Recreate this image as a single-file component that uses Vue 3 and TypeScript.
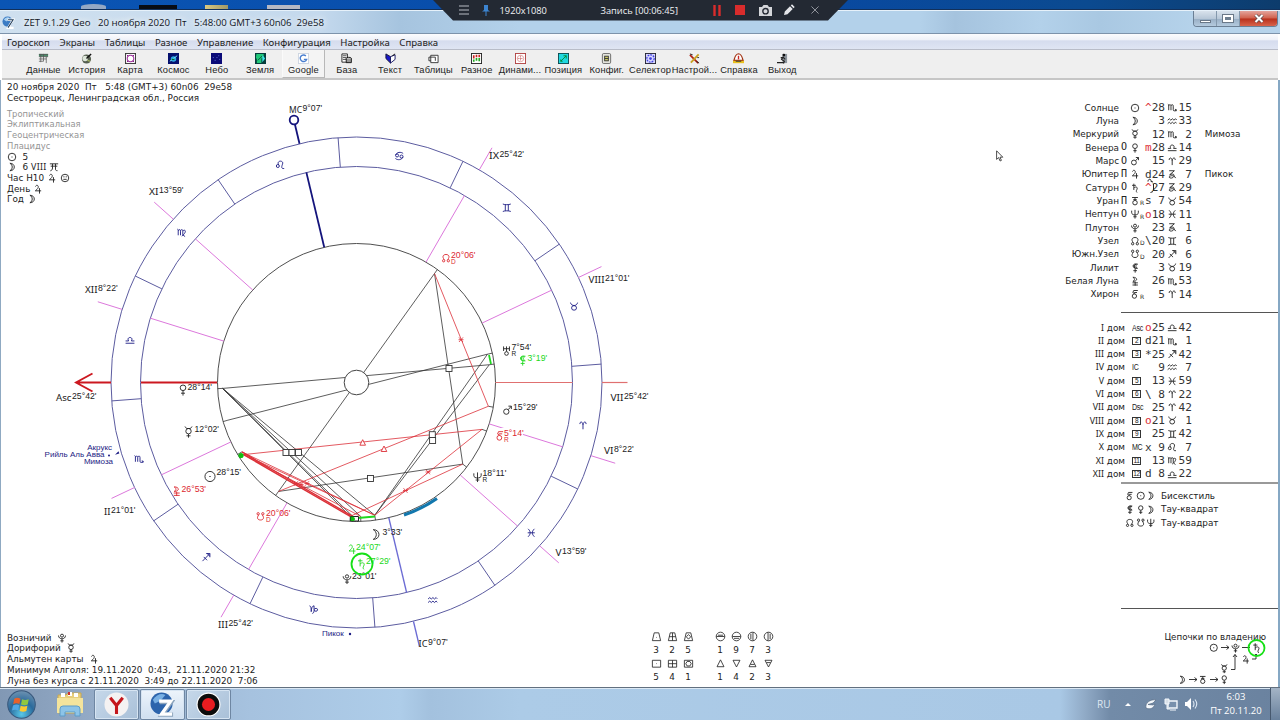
<script setup lang="ts">
import { ref } from "vue";

// every symbol is drawn by strokes inside a 12x12 box
const glyphs: Record<string, string> = {
  sun: "M1.5 6a4.5 4.5 0 1 0 9 0a4.5 4.5 0 1 0-9 0M5.4 6h1.2",
  moon: "M3.5 1.5C10.5 1.5 10.5 10.5 3.5 10.5C7.2 8.5 7.2 3.5 3.5 1.5",
  mercury: "M2.5 .5l1.6 2h3.8l1.6-2M3.3 5.2a2.7 2.7 0 1 0 5.4 0a2.7 2.7 0 1 0-5.4 0M6 8v3.7M4 9.8h4",
  venus: "M3.2 3.8a2.8 2.8 0 1 0 5.6 0a2.8 2.8 0 1 0-5.6 0M6 6.6v5M4 9.2h4",
  mars: "M1.8 7.8a2.9 2.9 0 1 0 5.8 0a2.9 2.9 0 1 0-5.8 0M6.8 5.6L10 2M7 1.8h3.2v3.2",
  jupiter: "M3 3C4 .5 7 1.5 6.2 4.3C5.7 6 4 7 2.8 8.2h7M7.8 5v6.5",
  saturn: "M2.5 2.8h4.5M4.6 .8v7.6M4.6 6C6.5 4 9.2 4.6 8.6 7C8.2 8.6 6.6 9.6 8.4 11.4",
  uranus: "M2.8 1v5M9.2 1v5M2.8 3.5h6.4M6 1v5.5M4 8.7a2 2 0 1 0 4 0a2 2 0 1 0-4 0",
  uranusT: "M2.5 1.8h7M4 4.3h4M6 1.8v2.5M3.3 8a2.7 2.7 0 1 0 5.4 0a2.7 2.7 0 1 0-5.4 0",
  neptune: "M2 2v2.5c0 3.5 8 3.5 8 0V2M6 1v10.5M4 9.3h4",
  pluto: "M4.2 3.2a1.8 1.8 0 1 0 3.6 0a1.8 1.8 0 1 0-3.6 0M1.8 3c0 5.3 8.4 5.3 8.4 0M6 7v4.5M4 9.4h4",
  node: "M4 8C1 4.5 2.5 1.8 6 1.8s5 2.7 2 6.2M1.8 9.3a1.4 1.4 0 1 0 2.8 0a1.4 1.4 0 1 0-2.8 0M7.4 9.3a1.4 1.4 0 1 0 2.8 0a1.4 1.4 0 1 0-2.8 0",
  snode: "M4 4C1 7.5 2.5 10.2 6 10.2s5-2.7 2-6.2M1.8 2.7a1.4 1.4 0 1 0 2.8 0a1.4 1.4 0 1 0-2.8 0M7.4 2.7a1.4 1.4 0 1 0 2.8 0a1.4 1.4 0 1 0-2.8 0",
  lilith: "M9 1.4C2 -.6 2 7.6 9 6.4C6.4 5 6.4 2.8 9 1.4M7.6 1.6C4 1.2 4 6.4 7.4 6.2M5.2 2v4M6.2 6.8v4.8M4 9.2h4.4",
  selena: "M3.5 1.5C9.5 1.5 9.5 6.5 3.5 6.5C6 5 6 3 3.5 1.5M3 8.2h6.5M3 10.8h6.5M6.2 7v4.5",
  chiron: "M2.7 8.5a2.6 2.6 0 1 0 5.2 0a2.6 2.6 0 1 0-5.2 0M5.8 5.8L3.4 4.4L4.4 1.8h5M5 4.2h3.4",
  aries: "M2.5 4.6C2.1 1.5 5.8 1.3 6 5.5V10.5M9.5 4.6C9.9 1.5 6.2 1.3 6 5.5",
  taurus: "M3.2 7.8a2.8 2.6 0 1 0 5.6 0a2.8 2.6 0 1 0-5.6 0M2 1.8c.8 4.4 7.2 4.4 8 0",
  gemini: "M1.5 1.8c2.5 1 6.5 1 9 0M1.5 10.2c2.5-1 6.5-1 9 0M4.3 2.5v7M7.7 2.5v7",
  cancer: "M1.8 5.4a1.7 1.7 0 1 0 3.4 0a1.7 1.7 0 1 0-3.4 0M6.8 6.6a1.7 1.7 0 1 0 3.4 0a1.7 1.7 0 1 0-3.4 0M1.8 5C3 1.4 8 1 10.4 3.2M10.2 7C9 10.600 4 11 1.6 8.8",
  leo: "M1.5 7.2a1.7 1.7 0 1 0 3.4 0a1.7 1.7 0 1 0-3.4 0M4 5.8C1.5 .5 10 .5 8.6 4.8C7.6 7.5 6.4 10.6 10.4 10",
  virgo: "M1 2.5l1 .8V9.5M2 4c2-1.8 2.6-.5 2.6 .8V9.5M4.6 4c2-1.8 2.6-.5 2.6 .8V9l2.6 2M7.2 4.5c3.6-2.5 4.4 2-1.2 6",
  libra: "M1 10h10M1 7.4h3.4C1.4 2.2 10.6 2.2 7.6 7.4H11",
  scorpio: "M1 2.5l1 .8V9.5M2 4c2-1.8 2.6-.5 2.6 .8V9.5M4.6 4c2-1.8 2.6-.5 2.6 .8V9c0 1.6 1.8 1.6 3.4 .4M9.2 8.4l1.8 .6l-.8 1.8",
  sagittarius: "M1.8 10.4L10 2M6 1.8h4.2V6M7 1.8l3.2 3M3.2 5.6l3.8 3.8",
  capricorn: "M1.2 2.5c1.6 0 2 2 2 6.5C3.4 5 4.4 2.4 6.4 2.4V8c0 2-1 3-2 3M6.4 6.6c1-2 4.2-1.6 4 .4s-3 2-4 .4",
  capricornT: "M2.500 2h6L3 6.8c3-2 6-.8 5 1.700S3 11 2.5 9.5S8 6 10 10.5",
  aquarius: "M.8 4.8l1.9-1.6 1.7 1.6 1.9-1.6 1.7 1.6 1.9-1.6 1.3 1.4M.8 8.8l1.9-1.6 1.7 1.6 1.9-1.6 1.7 1.6 1.9-1.6 1.3 1.4",
  pisces: "M2.4 1.5c3.2 3 3.2 6 0 9M9.6 1.5c-3.2 3-3.2 6 0 9M2 6h8",
  gate: "M1 2.2h10M2 5h8M4.2 2.2v5c0 2-1 3-2.6 3.4M7.8 2.2V9c0 1 .8 1.4 2.4 1.4",
  face: "M1.5 6a4.5 4.5 0 1 0 9 0a4.5 4.5 0 1 0-9 0M4 4.6h1.4M6.8 4.6h1.4M4 7.6h4",
};

const title = "ZET 9.1.29 Geo   20 ноября 2020  Пт   5:48:00 GMT+3 60n06  29e58";
const heading = "20 ноября 2020  Пт   5:48 (GMT+3) 60n06  29e58";
const algol = "Минимум Алголя: 19.11.2020  0:43,  21.11.2020 21:32";
const voidMoon = "Луна без курса с 21.11.2020  3:49 до 22.11.2020  7:06";

const menu = ref(["Гороскоп", "Экраны", "Таблицы", "Разное", "Управление", "Конфигурация", "Настройка", "Справка"]);

const tools = ref([
  { icon: "data", label: "Данные" },
  { icon: "history", label: "История" },
  { icon: "map", label: "Карта" },
  { icon: "cosmos", label: "Космос" },
  { icon: "sky", label: "Небо" },
  { icon: "earth", label: "Земля" },
  { icon: "google", label: "Google" },
  { icon: "base", label: "База" },
  { icon: "text", label: "Текст" },
  { icon: "tables", label: "Таблицы" },
  { icon: "misc", label: "Разное" },
  { icon: "dynamic", label: "Динами..." },
  { icon: "position", label: "Позиция" },
  { icon: "config", label: "Конфиг." },
  { icon: "selector", label: "Селектор" },
  { icon: "settings", label: "Настрой..." },
  { icon: "help", label: "Справка" },
  { icon: "exit", label: "Выход" },
]);

interface Row {
  name: string;
  dig?: string;
  g?: string;
  sub?: string;
  box?: string;
  abbr?: string;
  asp?: string;
  red?: boolean;
  deg: string;
  sign: string;
  min: string;
  star?: string;
}

const planets: Row[] = [
  { name: "Солнце", g: "sun", asp: "^", red: true, deg: "28", sign: "scorpio", min: "15" },
  { name: "Луна", g: "moon", deg: " 3", sign: "aquarius", min: "33" },
  { name: "Меркурий", g: "mercury", deg: "12", sign: "scorpio", min: " 2", star: "Мимоза" },
  { name: "Венера", dig: "O", g: "venus", asp: "m", red: true, deg: "28", sign: "libra", min: "14" },
  { name: "Марс", dig: "O", g: "mars", deg: "15", sign: "aries", min: "29" },
  { name: "Юпитер", dig: "П", g: "jupiter", asp: "d", deg: "24", sign: "capricornT", min: " 7", star: "Пикок" },
  { name: "Сатурн", dig: "O", g: "saturn", asp: "^", red: true, deg: "27", sign: "capricornT", min: "29" },
  { name: "Уран", dig: "П", g: "uranusT", sub: "R", asp: "s", deg: " 7", sign: "taurus", min: "54" },
  { name: "Нептун", dig: "O", g: "neptune", sub: "R", asp: "o", red: true, deg: "18", sign: "pisces", min: "11" },
  { name: "Плутон", g: "pluto", deg: "23", sign: "capricornT", min: " 1" },
  { name: "Узел", g: "node", sub: "D", asp: "\\", deg: "20", sign: "gemini", min: " 6" },
  { name: "Южн.Узел", g: "snode", sub: "D", deg: "20", sign: "sagittarius", min: " 6" },
  { name: "Лилит", g: "lilith", deg: " 3", sign: "taurus", min: "19" },
  { name: "Белая Луна", g: "selena", deg: "26", sign: "scorpio", min: "53" },
  { name: "Хирон", g: "chiron", sub: "R", deg: " 5", sign: "aries", min: "14" },
];

const houses: Row[] = [
  { name: "I", abbr: "Asc", asp: "o", red: true, deg: "25", sign: "libra", min: "42" },
  { name: "II", box: "2", asp: "d", deg: "21", sign: "scorpio", min: " 1" },
  { name: "III", box: "3", asp: "*", deg: "25", sign: "sagittarius", min: "42" },
  { name: "IV", abbr: "IC", deg: " 9", sign: "aquarius", min: " 7" },
  { name: "V", box: "5", deg: "13", sign: "pisces", min: "59" },
  { name: "VI", box: "6", asp: "\\", deg: " 8", sign: "aries", min: "22" },
  { name: "VII", abbr: "Dsc", deg: "25", sign: "aries", min: "42" },
  { name: "VIII", box: "8", asp: "o", red: true, deg: "21", sign: "taurus", min: " 1" },
  { name: "IX", box: "9", deg: "25", sign: "gemini", min: "42" },
  { name: "X", abbr: "MC", asp: "x", deg: " 9", sign: "leo", min: " 7" },
  { name: "XI", box: "11", deg: "13", sign: "virgo", min: "59" },
  { name: "XII", box: "12", asp: "d", deg: " 8", sign: "libra", min: "22" },
];

const patterns = [
  { g: ["chiron", "sun", "moon"], text: "Бисекстиль" },
  { g: ["lilith", "venus", "moon"], text: "Тау-квадрат" },
  { g: ["node", "snode", "neptune"], text: "Тау-квадрат" },
];

// chart geometry
const CX = 356.5;
const CY = 382.5;
const R_OUT = 245.5;
const R_ZOD = 216;
const R_IN = 139;
const R_ASP = 134;
const ASC = 205.7;

const pt = (lon: number, r: number) => {
  const a = ((180 + lon - ASC) * Math.PI) / 180;
  return { x: CX + r * Math.cos(a), y: CY - r * Math.sin(a) };
};

const seg = (lon: number, r1: number, r2: number) => {
  const a = pt(lon, r1);
  const b = pt(lon, r2);
  return { x1: a.x, y1: a.y, x2: b.x, y2: b.y };
};

const link = (l1: number, l2: number) => {
  const a = pt(l1, R_ASP);
  const b = pt(l2, R_ASP);
  return { x1: a.x, y1: a.y, x2: b.x, y2: b.y };
};

const signs = ["aries", "taurus", "gemini", "cancer", "leo", "virgo", "libra", "scorpio", "sagittarius", "capricorn", "aquarius", "pisces"].map(
  (name, i) => ({ name, border: i * 30, ...pt(i * 30 + 15, 230.5) })
);

const cusps = [
  { lon: 231.02, kind: "house" },
  { lon: 265.7, kind: "house" },
  { lon: 309.12, kind: "ic" },
  { lon: 343.98, kind: "house" },
  { lon: 8.37, kind: "house" },
  { lon: 25.7, kind: "dsc" },
  { lon: 51.02, kind: "house" },
  { lon: 85.7, kind: "house" },
  { lon: 163.98, kind: "house" },
  { lon: 188.37, kind: "house" },
];

const P = {
  sun: 238.25, moon: 303.55, mercury: 222.03, venus: 208.23, mars: 15.48,
  jupiter: 294.12, saturn: 297.48, uranus: 37.9, neptune: 348.18, pluto: 293.02,
  node: 80.1, snode: 260.1, lilith: 33.32, selena: 236.88, chiron: 5.23,
};

const blackAspects = [
  link(P.node, P.snode), link(P.venus, P.lilith), link(P.mercury, P.uranus),
  link(P.node, P.neptune), link(P.neptune, P.snode),
  link(P.venus, P.pluto), link(P.venus, P.jupiter), link(P.venus, P.saturn), link(P.venus, P.moon),
  link(P.uranus, P.moon), link(P.lilith, P.moon),
];

const redAspects = [
  link(P.node, P.mars), link(P.mars, P.snode), link(P.sun, P.chiron),
  link(P.chiron, P.moon), link(P.neptune, P.pluto),
  link(P.sun, P.saturn), link(P.selena, P.moon), link(P.sun, P.moon),
];

const boldAspects = [link(P.sun, P.pluto), link(P.selena, P.jupiter)];

const squares = [[286, 452.5], [292, 452.5], [298.5, 452.5], [449, 368.5], [432.3, 434.7], [432.6, 440.5], [370.5, 478.5]];
const triangles = [[362.7, 442.7], [384, 449]];
const stars = [[461, 339.7], [428, 472], [405.5, 490.5], [296, 483.5], [301, 484.5], [307, 483.5]];

const houseLabels = [
  { n: "MC", t: "9°07'", x: 289, y: 112.5, w: 13 },
  { n: "IX", t: "25°42'", x: 489, y: 159, w: 10 },
  { n: "VIII", t: "21°01'", x: 588.5, y: 283, w: 16 },
  { n: "VII", t: "25°42'", x: 610.5, y: 400.5, w: 13 },
  { n: "VI", t: "8°22'", x: 604, y: 454, w: 9.5 },
  { n: "V", t: "13°59'", x: 555.5, y: 556, w: 6 },
  { n: "IC", t: "9°07'", x: 418.5, y: 646.5, w: 9 },
  { n: "III", t: "25°42'", x: 218, y: 628, w: 10 },
  { n: "II", t: "21°01'", x: 104, y: 515, w: 6.5 },
  { n: "Asc", t: "25°42'", x: 56, y: 401, w: 15.5 },
  { n: "XII", t: "8°22'", x: 85, y: 292.5, w: 12.5 },
  { n: "XI", t: "13°59'", x: 149, y: 195, w: 9.5 },
];

const bodies = [
  { g: "node", x: 446, y: 258, t: "20°06'", tx: 451, ty: 257.5, c: "red", sub: "D", s: 10 },
  { g: "uranus", x: 506.5, y: 351, t: "7°54'", tx: 511.5, ty: 349.5, c: "black", sub: "R", s: 11 },
  { g: "lilith", x: 522.5, y: 360.5, t: "3°19'", tx: 527.5, ty: 360.5, c: "green", sub: "", s: 11 },
  { g: "mars", x: 507.5, y: 410, t: "15°29'", tx: 513, ty: 409.5, c: "black", sub: "", s: 11 },
  { g: "chiron", x: 500, y: 435.5, t: "5°14'", tx: 504, ty: 435.5, c: "red", sub: "R", s: 11 },
  { g: "neptune", x: 477.5, y: 477, t: "18°11'", tx: 482.5, ty: 475.5, c: "black", sub: "R", s: 11 },
  { g: "moon", x: 376, y: 534.5, t: "3°33'", tx: 382.5, ty: 534.5, c: "black", sub: "", s: 13 },
  { g: "jupiter", x: 352, y: 549, t: "24°07'", tx: 356, ty: 549.5, c: "green", sub: "", s: 11 },
  { g: "saturn", x: 361.5, y: 564, t: "27°29'", tx: 366, ty: 563.5, c: "green", sub: "", s: 12 },
  { g: "pluto", x: 347, y: 579, t: "23°01'", tx: 352, ty: 579, c: "black", sub: "", s: 11 },
  { g: "snode", x: 260.5, y: 516.5, t: "20°06'", tx: 266, ty: 516, c: "red", sub: "D", s: 10 },
  { g: "selena", x: 176.5, y: 491, t: "26°53'", tx: 181.5, ty: 491.5, c: "red", sub: "", s: 11 },
  { g: "sun", x: 210, y: 476.5, t: "28°15'", tx: 216.5, ty: 475, c: "black", sub: "", s: 13.5 },
  { g: "mercury", x: 188.5, y: 432, t: "12°02'", tx: 194.5, ty: 431.5, c: "black", sub: "", s: 12 },
  { g: "venus", x: 183, y: 390, t: "28°14'", tx: 187.5, ty: 389.5, c: "black", sub: "", s: 12 },
];

const counts = [
  ["trap", "trapCross", "trapRound", "", "upper", "lower", "east", "west"],
  ["3", "2", "5", "", "1", "9", "7", "3"],
  ["box", "boxCross", "boxRound", "", "tri", "triDown", "triBar", "triDownBar"],
  ["5", "4", "1", "", "1", "4", "2", "3"],
];

const countIcons: Record<string, string> = {
  trap: "M3.5 2h5l2 8.5h-9zM6 6.5v.6",
  trapCross: "M3.5 2h5l2 8.5h-9zM6 2v8.5M2.5 6.2h7",
  trapRound: "M3.5 2h5l2 8.5h-9zM3.6 6.3l2.4-2.3 2.4 2.3-2.4 2.6z",
  upper: "M1.3 6a4.7 4.7 0 1 0 9.4 0a4.7 4.7 0 1 0-9.4 0zM1.5 6h9M3.2 4.6h5.6",
  lower: "M1.3 6a4.7 4.7 0 1 0 9.4 0a4.7 4.7 0 1 0-9.4 0zM1.5 6h9M3.2 8h5.6",
  east: "M1.3 6a4.7 4.7 0 1 0 9.4 0a4.7 4.7 0 1 0-9.4 0zM6.5 1.5v9M4.2 3v6",
  west: "M1.3 6a4.7 4.7 0 1 0 9.4 0a4.7 4.7 0 1 0-9.4 0zM5.5 1.5v9M7.8 3v6",
  box: "M1.5 2.5h9v7.5h-9zM6 6v.6",
  boxCross: "M1.5 2.5h9v7.5h-9zM6 2.5v7.5M1.5 6.2h9",
  boxRound: "M1.5 2.5h9v7.5h-9zM3 6.2l1.5-2.4h3l1.5 2.4-1.5 2.5h-3z",
  tri: "M6 2l3.8 7.5H2.2z",
  triDown: "M6 9.8L9.8 2.5H2.2z",
  triBar: "M6 2l3.8 7.5H2.2zM3.8 7h4.4",
  triDownBar: "M6 9.8L9.8 2.5H2.2zM3.8 5h4.4",
};
</script>

<template>
  <div class="screen">
    <svg class="defs" width="0" height="0">
      <symbol v-for="(d, name) in glyphs" :id="'g-' + name" :key="name" viewBox="0 0 12 12">
        <path :d="d" fill="none" stroke="currentColor" stroke-width=".9" vector-effect="non-scaling-stroke" />
      </symbol>
    </svg>

    <div class="desktop">
      <i class="peek peek-disc"></i>
      <i class="peek peek-dark"></i>
      <i class="peek peek-folder"></i>
      <i class="peek peek-doc"></i>
    </div>

    <header class="titlebar">
      <svg class="logo" viewBox="0 0 14 14">
        <circle cx="6" cy="6" r="5.5" fill="#3c7cc4" />
        <path d="M2 4c2-3 5-3 6-2L5 6z" fill="#a8d0f0" />
        <path d="M6 4h6L6.5 13h6" fill="none" stroke="#fff" stroke-width="2.6" />
        <path d="M6.5 4H12L6.5 12.5" fill="none" stroke="#26405c" stroke-width="1.1" />
      </svg>
      <span class="caption">{{ title }}</span>
      <div class="controls">
        <span class="ctl"><i class="min"></i></span>
        <span class="ctl"><i class="max"></i></span>
        <span class="ctl close">
          <svg viewBox="0 0 10 9"><path d="M1.5 1l7 7M8.5 1l-7 7" stroke="#54464a" stroke-width="3.4" /><path d="M1.5 1l7 7M8.5 1l-7 7" stroke="#fff" stroke-width="2.1" /></svg>
        </span>
      </div>
    </header>

    <nav class="menu">
      <span v-for="m in menu" :key="m">{{ m }}</span>
    </nav>

    <div class="toolbar">
      <div v-for="t in tools" :key="t.icon" class="tool" :class="{ raised: t.icon === 'google' }">
        <svg viewBox="0 0 12 12">
          <g v-if="t.icon === 'data'"><path d="M1 1h10v3H1z" fill="#4b8a6a" /><path d="M1 1.5h10M1 4h10M1 6.5h8M1 9h5M3 1v9M6 1v8M9 4v7" stroke="#555" fill="none" stroke-width=".8" /></g>
          <g v-else-if="t.icon === 'history'"><circle cx="6" cy="6.5" r="5" fill="#555f50" /><circle cx="4.5" cy="6" r="3" fill="#dde6da" /><path d="M6 6l5-5" stroke="#111" stroke-width="1.6" /><path d="M7 8l3 1" stroke="#a8b860" stroke-width="1.4" /></g>
          <g v-else-if="t.icon === 'map'"><rect x=".5" y=".5" width="11" height="11" fill="#fff" stroke="#333" /><circle cx="6" cy="6" r="3.6" fill="#fff" stroke="#a030a0" stroke-width="1.2" /><path d="M2 2l1.500 1.500M10 2L8.500 3.500M2 10l1.500-1.500M10 10L8.500 8.500" stroke="#702070" /></g>
          <g v-else-if="t.icon === 'cosmos'"><rect width="12" height="12" fill="#06106e" /><circle cx="6" cy="6.5" r="3" fill="#30a8e8" /><path d="M2 9l8-6" stroke="#7ef" /><path d="M4 7h3" stroke="#063" stroke-width="1.5" /></g>
          <g v-else-if="t.icon === 'sky'"><rect width="12" height="12" fill="#0a0a78" /><path d="M2 5h1M4 8h1M8 3h1M9 7h1M6 5h1" stroke="#6a7ae0" /></g>
          <g v-else-if="t.icon === 'earth'"><rect width="12" height="12" fill="#063c3c" /><path d="M1.500 1h8v3L7 6v5H2V7l-1-2z" fill="#20c878" /><path d="M8 2l3 4-3 4z" fill="#40e8e8" /><path d="M3 8l5-5" stroke="#0a5a40" /></g>
          <g v-else-if="t.icon === 'google'"><rect x=".5" y=".5" width="11" height="11" fill="#fff" stroke="#ccd4e0" /><path d="M8.6 3.2A3.6 3.6 0 1 0 9.4 7H6.4" fill="none" stroke="#4a7fd0" stroke-width="1.5" /></g>
          <g v-else-if="t.icon === 'base'"><path d="M1 1h6v9H1z" fill="#fff" stroke="#222" /><path d="M2 3h4M2 5h4M2 7h4" stroke="#444" /><ellipse cx="8.5" cy="6" rx="2.8" ry="1.3" fill="#ddd" stroke="#111" /><path d="M5.7 6v4.5h5.6V6" fill="#999" stroke="#111" /></g>
          <g v-else-if="t.icon === 'text'"><path d="M1 1l5 3v7L1 6z" fill="#1818c8" stroke="#101030" /><path d="M6 4l5-2v5l-5 4z" fill="#fff" stroke="#101060" /><path d="M8 3l3-2" stroke="#111" /></g>
          <g v-else-if="t.icon === 'tables'"><path d="M3 2.5h8v8H3z" fill="#fff" stroke="#333" /><path d="M1 4.5h7M1 4.5v4h2M8 4.5v4" stroke="#333" fill="none" /></g>
          <g v-else-if="t.icon === 'misc'"><rect x=".5" y=".5" width="11" height="11" fill="#fff" stroke="#222" /><path d="M3 2.500v3.500M6 2v2.500M9 2v2.500" stroke="#c22" stroke-width="1.8" /><path d="M3 7v2.500M6 5.500v3M9 5.500v3.500" stroke="#2a2" stroke-width="1.8" /></g>
          <g v-else-if="t.icon === 'dynamic'"><rect x=".5" y=".5" width="11" height="11" fill="#fff" stroke="#b04040" /><circle cx="6" cy="6" r="3.5" fill="none" stroke="#e0a0a0" /><path d="M6 3v6M3 6h6" stroke="#c05050" stroke-dasharray="1 1" /></g>
          <g v-else-if="t.icon === 'position'"><rect x=".5" y=".5" width="11" height="11" fill="#20d8e0" stroke="#0a4a50" /><path d="M3 9l6-6M9 3H6M9 3v3M3 9h2M3 9V7" stroke="#083" fill="none" /></g>
          <g v-else-if="t.icon === 'config'"><rect x="1.5" y=".5" width="9" height="11" rx="1.5" fill="#e4e4dc" stroke="#666" /><rect x="4" y="3.5" width="4" height="5" fill="#cc6" stroke="#333" /><path d="M4 6h4" stroke="#333" /></g>
          <g v-else-if="t.icon === 'selector'"><rect x=".5" y=".5" width="11" height="11" fill="#d8d8ff" stroke="#223" /><circle cx="6" cy="6" r="4" fill="none" stroke="#4040e0" stroke-width="1.4" stroke-dasharray="2 1" /><circle cx="6" cy="6" r="1.5" fill="#4040e0" /></g>
          <g v-else-if="t.icon === 'settings'"><path d="M1 2l9 9" stroke="#b02010" stroke-width="1.8" /><path d="M10.5 1.5L2 10.5" stroke="#c8a020" stroke-width="2" /><path d="M1 1l3 1M8 9l3 2M9 5l2 0" stroke="#222" /></g>
          <g v-else-if="t.icon === 'help'"><path d="M6 .8C2 1 2 6 1 8h10C10 6 10 1 6 .8z" fill="#fff" stroke="#a03010" stroke-width="1.2" /><path d="M6 3v4" stroke="#c22" stroke-width="1.5" /><path d="M0 9.8h12" stroke="#e8c020" stroke-width="2.6" /><path d="M3 9h6" stroke="#234" /></g>
          <g v-else><path d="M6 1h5v10H6z" fill="#8c949c" /><circle cx="7.500" cy="2.300" r="1.5" fill="#111" /><path d="M7 4L5 7l3 2-1 2.5M4 5l3 0 2 2M0 10.5h8" stroke="#222" stroke-width="1.3" fill="none" /></g>
        </svg>
        <span>{{ t.label }}</span>
      </div>
    </div>

    <main class="canvas">
      <svg class="chart" viewBox="0 80 660 607">
        <g class="wheel">
          <circle :cx="CX" :cy="CY" :r="R_OUT" />
          <circle :cx="CX" :cy="CY" :r="R_ZOD" />
          <line v-for="s in signs" :key="s.name" v-bind="seg(s.border, R_ZOD, R_OUT)" />
          <use v-for="s in signs" :key="s.name + 'g'" :href="'#g-' + s.name" :x="s.x - 5.3" :y="s.y - 5.3" width="10.6" height="10.6" />
        </g>
        <circle class="inner" :cx="CX" :cy="CY" :r="R_IN" />
        <g v-for="c in cusps" :key="c.lon" :class="c.kind">
          <line v-bind="seg(c.lon, R_IN, R_ZOD)" />
          <line v-bind="seg(c.lon, R_OUT, 271)" />
        </g>
        <g class="mc">
          <line v-bind="seg(129.12, R_IN, R_ZOD)" />
          <line v-bind="seg(129.12, R_OUT, 265.5)" />
          <circle cx="294" cy="120" r="4.3" />
        </g>
        <g class="asc">
          <path d="M217 382.5H141M111 382.5H76M92.5 373.5L76 382.5L92.5 391.5" />
        </g>

        <g class="black thin"><line v-for="(l, i) in blackAspects" :key="i" v-bind="l" /></g>
        <g class="black thin"><line v-for="(l, k) in P" :key="k" v-bind="seg(l, R_ASP, R_IN)" /></g>
        <g class="red thin"><line v-for="(l, i) in redAspects" :key="i" v-bind="l" /></g>
        <g class="red bold"><line v-for="(l, i) in boldAspects" :key="i" v-bind="l" /></g>
        <path class="green-line" d="M489 355L491 364M352 518.5L375 516.5" />
        <circle cx="241" cy="455.5" r="2.6" fill="#12c012" />
        <path d="M350.5 516.5h8v4.5h-8z" fill="#fff" stroke="#222" />
        <path d="M350.5 516.5h3v4.5h-3z" fill="#12a012" />
        <circle cx="353" cy="519" r="2" fill="#12c012" />
        <path d="M404 515Q422 509 437 498.5" fill="none" stroke="#1277ad" stroke-width="3" />
        <circle class="hub" :cx="CX" :cy="CY" r="12.3" />
        <g class="mark black"><rect v-for="(q, i) in squares" :key="i" :x="q[0] - 3" :y="q[1] - 3" width="6" height="6" /></g>
        <g class="mark red"><path v-for="(q, i) in triangles" :key="i" :d="`M${q[0]} ${q[1] - 3}l2.8 5.5h-5.6z`" /></g>
        <g class="red thin"><path v-for="(q, i) in stars" :key="i" :d="`M${q[0] - 2.5} ${q[1]}h5M${q[0] - 2} ${q[1] - 2.3}l4 4.6M${q[0] + 2} ${q[1] - 2.3}l-4 4.6`" /></g>

        <rect x="495" y="428" width="28" height="13" fill="#fff" />
        <g v-for="b in bodies" :key="b.g" :class="'body ' + b.c">
          <use :href="'#g-' + b.g" :x="b.x - b.s / 2" :y="b.y - b.s / 2" :width="b.s" :height="b.s" />
          <text :x="b.tx" :y="b.ty">{{ b.t }}</text>
          <text v-if="b.sub" class="retro" :x="b.tx" :y="b.ty + 6">{{ b.sub }}</text>
        </g>
        <circle cx="362" cy="564" r="10.5" fill="none" stroke="#16e016" stroke-width="1.8" />

        <g v-for="h in houseLabels" :key="h.n" class="house-label">
          <text class="roman" :x="h.x" :y="h.y" :textLength="h.w" lengthAdjust="spacingAndGlyphs">{{ h.n }}</text>
          <text :x="h.x + h.w + .5" :y="h.y - 2">{{ h.t }}</text>
        </g>

        <g class="fixed-star">
          <text x="112" y="449.5" text-anchor="end">Акрукс</text>
          <text x="104.5" y="457" text-anchor="end">Рийль Аль Авва</text>
          <text x="113" y="463.5" text-anchor="end">Мимоза</text>
          <text x="322" y="635.5">Пикок</text>
          <circle cx="109" cy="455.5" r="1" />
          <path d="M115 454.8l3.500-3.600 .8 2.400z" />
          <circle cx="350" cy="634" r="1.2" />
        </g>
      </svg>

      <section class="info">
        <p>{{ heading }}</p>
        <p>Сестрорецк, Ленинградская обл., Россия</p>
        <div class="grey">
          <p>Тропический</p>
          <p>Эклиптикальная</p>
          <p>Геоцентрическая</p>
          <p>Плацидус</p>
        </div>
        <p><svg class="gl"><use href="#g-sun" /></svg>{{ "  5" }}</p>
        <p><svg class="gl"><use href="#g-moon" /></svg>{{ "  6 " }}<span class="rom wide">VIII</span> <svg class="gl"><use href="#g-gate" /></svg></p>
        <p>Час H10 <svg class="gl"><use href="#g-jupiter" /></svg> <svg class="gl"><use href="#g-face" /></svg></p>
        <p>День <svg class="gl"><use href="#g-jupiter" /></svg></p>
        <p>Год <svg class="gl"><use href="#g-moon" /></svg></p>
      </section>

      <section class="summary">
        <p>Возничий {{ " " }}<svg class="gl"><use href="#g-pluto" /></svg></p>
        <p>Дорифорий {{ " " }}<svg class="gl"><use href="#g-mercury" /></svg></p>
        <p>Альмутен карты {{ " " }}<svg class="gl"><use href="#g-jupiter" /></svg></p>
        <p>{{ algol }}</p>
        <p>{{ voidMoon }}</p>
      </section>

      <section class="counts">
        <template v-for="(row, r) in counts" :key="r">
          <span v-for="(c, i) in row" :key="i">
            <svg v-if="countIcons[c]" viewBox="0 0 12 12"><path :d="countIcons[c]" fill="none" stroke="#222" stroke-width=".9" /></svg>
            <template v-else>{{ c }}</template>
          </span>
        </template>
      </section>

      <aside class="side">
        <div class="planets">
          <div v-for="p in planets" :key="p.name" class="row">
            <span class="name">{{ p.name }}</span>
            <span class="dig">{{ p.dig }}</span>
            <span class="sym"><svg><use :href="'#g-' + p.g" /></svg><sub>{{ p.sub }}</sub></span>
            <span class="num asp" :class="{ hot: p.red }">{{ p.asp }}</span>
            <span class="num">{{ p.deg }}</span>
            <svg class="sign"><use :href="'#g-' + p.sign" /></svg>
            <span class="num">{{ p.min }}</span>
            <span class="star">{{ p.star }}</span>
            <svg v-if="p.name === 'Сатурн'" class="busy" viewBox="0 0 10 16"><path d="M1 3.5C1 .5 4.500 .5 4 3.500L6 4M6.500 6v6.500M6 13.500L3.500 14.500" fill="none" stroke="#222" /></svg>
          </div>
        </div>
        <hr />
        <div class="houses">
          <div v-for="h in houses" :key="h.name" class="row">
            <span class="name"><span class="rom">{{ h.name }}</span> дом</span>
            <span class="sym"><b v-if="h.box">{{ h.box }}</b><em v-else>{{ h.abbr }}</em></span>
            <span class="num asp" :class="{ hot: h.red }">{{ h.asp }}</span>
            <span class="num">{{ h.deg }}</span>
            <svg class="sign"><use :href="'#g-' + h.sign" /></svg>
            <span class="num">{{ h.min }}</span>
          </div>
        </div>
        <hr class="thick" />
        <div class="patterns">
          <div v-for="(p, i) in patterns" :key="i">
            <svg v-for="g in p.g" :key="g"><use :href="'#g-' + g" /></svg>
            <span>{{ p.text }}</span>
          </div>
        </div>
        <hr />
        <div class="chains">
          <span>Цепочки по владению</span>
          <svg viewBox="1168 642 110 45">
            <g color="#222">
              <use href="#g-sun" x="1209" y="643" width="9.500" height="9.500" />
              <use href="#g-pluto" x="1230.500" y="643" width="10" height="10" />
              <use href="#g-saturn" x="1251" y="642" width="11" height="12" />
              <use href="#g-jupiter" x="1241" y="654.500" width="9.500" height="9.500" />
              <use href="#g-mercury" x="1219.500" y="664" width="9.500" height="9.500" />
              <use href="#g-moon" x="1177.500" y="675" width="9.500" height="9.500" />
              <use href="#g-uranusT" x="1198" y="675" width="9.500" height="9.500" />
              <use href="#g-venus" x="1219.500" y="675" width="9.500" height="9.500" />
            </g>
            <path d="M1221 647.500h8M1226.500 645.500l2.500 2-2.500 2M1242 647.500h8M1189 679.500h8M1194.500 677.500l2.500 2-2.500 2M1210 679.500h8M1215.500 677.500l2.500 2-2.500 2M1231 669.500h4V654.500M1233 657l2-2.500 2 2.500M1252 659h4v-5M1254.500 656l1.500-2 1.500 2" fill="none" stroke="#222" stroke-width=".9" />
            <circle cx="1256.500" cy="648" r="8" fill="none" stroke="#16e016" stroke-width="1.8" />
          </svg>
        </div>
      </aside>

      <svg class="cursor" viewBox="0 0 8 12"><path d="M.6 .8v8.600l2-1.800 1.500 3.400 1.300-.6L4 7.200h2.800z" fill="#fff" stroke="#222" stroke-width=".8" /></svg>
    </main>

    <footer class="taskbar">
      <svg class="orb" viewBox="0 0 28 28">
        <defs>
          <radialGradient id="orb" cx=".5" cy=".85" r=".9"><stop offset="0" stop-color="#58c8e8" /><stop offset=".5" stop-color="#2a6a9c" /><stop offset="1" stop-color="#7898b4" /></radialGradient>
        </defs>
        <circle cx="14" cy="14" r="13.300" fill="url(#orb)" stroke="#38587c" />
        <path d="M7 8.500q3-2 6 0l-1 5q-3-1.500-6 .2z" fill="#e8622c" />
        <path d="M14.500 9q3 1.500 6.500 0l-1 5q-3 1.500-6.500 0z" fill="#90c840" />
        <path d="M5.800 15q3-1.800 6-.2l-1 5q-3-1.500-6 0z" fill="#50a8e8" />
        <path d="M13.200 15.200q3.500 1.500 6.500 0l-1 5q-3 1.500-6.500 0z" fill="#fcc830" />
      </svg>
      <svg class="folder" viewBox="0 0 28 26">
        <path d="M2 4h8l2-2h13v20H2z" fill="#e8cf7c" stroke="#c8a850" />
        <path d="M5 2h4v4H5zM12 1h4v4h-4zM18 2h4v4h-4z" fill="#fff" /><path d="M12 1h2v3h-2z" fill="#c33" />
        <path d="M1 7h26v15H1z" fill="#f4e49c" />
        <path d="M4 25v-7q0-3 3-3h14q3 0 3 3v7h-5v-4H9v4z" fill="#8cc4e8" stroke="#5c9cc8" />
      </svg>
      <div class="task">
        <svg viewBox="0 0 26 26"><circle cx="13" cy="13" r="12.500" fill="#f4f2f2" /><path d="M6.500 6l6.500 8 6.500-8M13 13.500V23" fill="none" stroke="#c4161c" stroke-width="3.200" /></svg>
      </div>
      <div class="task active">
        <svg viewBox="0 0 26 26"><circle cx="12" cy="12" r="11.500" fill="#2c64ac" /><path d="M3 8q6-8 13-5l-5 6-6 3z" fill="#78b0e4" /><path d="M10 10.500H22L12.500 23.500H24" fill="none" stroke="#8ca4bc" stroke-width="4.600" /><path d="M9.500 9.500h12L12 23h11" fill="none" stroke="#fff" stroke-width="3.400" /></svg>
      </div>
      <div class="task">
        <svg viewBox="0 0 26 26"><circle cx="13" cy="13" r="12.500" fill="#fff" /><circle cx="13" cy="13" r="11.300" fill="#0c0c0c" /><circle cx="13" cy="13" r="6.800" fill="#e81c20" /></svg>
      </div>
      <div class="tray">
        <span class="lang">RU</span>
        <i class="up"></i>
        <svg viewBox="0 0 14 14"><path d="M2 11C1 6 6 2 12 3L9 6 4 7.500 9 8l2-1C10 11 6 13 2 11z" fill="#f4f8fc" stroke="#4c6078" stroke-width=".6" /></svg>
        <svg viewBox="0 0 14 14"><path d="M4 4h9v7H4z" fill="#7890ac" stroke="#f4f8fc" stroke-width="1.400" /><path d="M1 2h4v5H1zM3 7v5h3M6 13h6" fill="#d8e0e8" stroke="#f4f8fc" /></svg>
        <svg viewBox="0 0 14 14"><path d="M1 5h2l4-4v12L3 9H1z" fill="#fff" /><path d="M9 4q2 3 0 6M11 2.500q3.500 4.500 0 9" fill="none" stroke="#dde8f4" stroke-width="1.100" /></svg>
        <div class="clock"><span>6:03</span><span>Пт 20.11.20</span></div>
        <i class="peekbtn"></i>
      </div>
    </footer>

    <div class="recorder">
      <svg class="burger" viewBox="0 0 10 10"><path d="M0 1h10M0 5h10M0 9h10" stroke="#b8bcc4" stroke-width="1.100" /></svg>
      <svg class="pin" viewBox="0 0 8 11"><path d="M2 0h4v5l2 1.500H0L2 5zM3.500 6h1v5h-1z" fill="#3c84d0" /></svg>
      <span class="res">1920x1080</span>
      <span class="rec">Запись [00:06:45]</span>
      <svg class="pause" viewBox="0 0 8 11"><path d="M1.500 0v11M6.500 0v11" stroke="#d82c2c" stroke-width="2.400" /></svg>
      <i class="stop"></i>
      <svg class="cam" viewBox="0 0 13 11"><path d="M0 2h3l1.500-2h4L10 2h3v9H0z" fill="#d4d6da" /><circle cx="6.500" cy="6.200" r="2.700" fill="#d4d6da" stroke="#252a34" stroke-width="1.400" /></svg>
      <svg class="pen" viewBox="0 0 12 12"><path d="M1 11l.8-3.500L7 2.300l2.700 2.700L4.500 10.200zM7.800 1.500L9 .3 11.700 3l-1.200 1.200z" fill="#e4e6ea" /></svg>
      <svg class="x" viewBox="0 0 9 9"><path d="M.5 .5l8 8M8.500 .5l-8 8" stroke="#9498a0" stroke-width="1.100" /></svg>
    </div>
  </div>
</template>

<style>
body {
  margin: 0;
  overflow: hidden;
}
</style>

<style scoped>
.screen {
  position: relative;
  width: 1280px;
  height: 720px;
  display: grid;
  grid-template-rows: 10px 24px 16px 30px 607px 33px;
  background: #fff;
  color: #222;
  font-family: "DejaVu Sans", sans-serif;
  font-size: 8.85px;
  overflow: hidden;
}

.screen * {
  box-sizing: border-box;
}

.defs {
  position: absolute;
}

.desktop {
  position: relative;
  background: linear-gradient(90deg, #0a55b4, #0849a4 60%, #0b4a90 85%, #0d3c6c);
  border-bottom: 1px solid #12305a;
}

.peek {
  position: absolute;
  bottom: 0;
  height: 4px;
}

.peek-disc {
  left: 81px;
  width: 25px;
  height: 5px;
  border-radius: 50% 50% 0 0;
  background: #94a8c4;
}

.peek-dark {
  left: 139px;
  width: 38px;
  background: #080c14;
}

.peek-folder {
  left: 205px;
  width: 23px;
  background: linear-gradient(90deg, #d8c880, #a09868);
}

.peek-doc {
  left: 267px;
  width: 33px;
  background: #b4b8c4;
}

.titlebar {
  display: flex;
  align-items: center;
  padding-left: 2px;
  background: linear-gradient(90deg, #cfe0ef 0, #c4d9ed 320px, #a6c4df 400px, #b3d1ea 520px, #b3d1ea 920px, #a5c3de 955px, #b3d1ea 1040px, #a9c8e2 1100px, #b6d3eb 1200px);
  border-top: 1px solid #e6f1fa;
  border-bottom: 1px solid #7d93ab;
}

.logo {
  width: 13px;
  height: 13px;
  margin-right: 9px;
}

.caption {
  font: 9.65px "Open Sans", sans-serif;
  white-space: pre;
  color: #10161e;
  text-shadow: 0 0 6px #fff, 0 0 8px #fff;
}

.controls {
  display: flex;
  align-self: flex-start;
  width: 85px;
  height: 16px;
  margin-left: auto;
  margin-right: 2px;
  border: 1px solid #6b7f94;
  border-top: 0;
  border-radius: 0 0 4px 4px;
  overflow: hidden;
}

.ctl {
  flex: 0 0 23px;
  display: flex;
  align-items: center;
  justify-content: center;
  border-right: 1px solid #8398ac;
  background: linear-gradient(#d8e2ec, #b8c8d8 50%, #98aec4 52%, #b4cade);
}

.ctl.close {
  flex: 1;
  border-right: 0;
  background: linear-gradient(#e4a49c, #d0604c 48%, #b8301c 52%, #d8644c);
}

.ctl svg {
  width: 10px;
  height: 9px;
}

.min {
  width: 11px;
  height: 3px;
  margin-top: 6px;
  background: #fff;
  border: 1px solid #6a7888;
}

.max {
  width: 10px;
  height: 7px;
  border: 2px solid #fff;
  outline: 1px solid #6a7888;
  background: #6f7f90;
}

.menu {
  display: flex;
  align-items: center;
  padding-left: 2px;
  margin: 0 2px;
  background: linear-gradient(#fbfcfe, #eef1f8 40%, #d5dcee 45%, #dfe5f3);
  border-bottom: 1px solid #b8bcc8;
  font: 9.6px "Noto Sans", sans-serif;
}

.menu span {
  padding: 1px 4.55px 0 5px;
}

.menu span:first-child {
  padding-left: 3px;
}

.toolbar {
  display: flex;
  padding-left: 19.8px;
  margin: 0 2px;
  background: #efefef;
  border-bottom: 2px solid #c6c6c6;
}

.tool {
  flex: 0 0 43.33px;
  display: flex;
  flex-direction: column;
  align-items: center;
  padding-top: 3px;
  height: 28px;
  font: 9.3px "Liberation Sans", sans-serif;
  white-space: nowrap;
}

.tool svg {
  flex: none;
  width: 11px;
  height: 11px;
}

.tool span {
  margin-top: 1px;
  letter-spacing: .15px;
}

.raised {
  border-right: 1px solid #b8b8b8;
  border-bottom: 1px solid #b8b8b8;
  border-left: 1px solid #fafafa;
  background: #f4f4f4;
}

.canvas {
  position: relative;
  display: grid;
  border-left: 1px solid #8fa9c2;
  border-right: 2px solid #86a8c4;
  background: #fff;
}

.canvas > * {
  grid-area: 1 / 1;
}

.chart {
  width: 660px;
  height: 607px;
  margin-left: -1px;
  font: 8.7px "Liberation Sans", sans-serif;
}

.wheel {
  fill: none;
  stroke: #5c5ca0;
  color: #1c1c84;
}

.wheel use {
  stroke: none;
}

.inner {
  fill: none;
  stroke: #505050;
}

.house {
  stroke: #dc78dc;
}

.ic {
  stroke: #6c6cd4;
  stroke-width: 1.4;
}

.dsc {
  stroke: #e07070;
  stroke-width: 1.2;
}

.mc {
  fill: #fff;
  stroke: #14147c;
  stroke-width: 1.8;
}

.asc {
  fill: none;
  stroke: #cc1820;
  stroke-width: 1.9;
}

.thin {
  stroke-width: .8;
  fill: none;
}

.black {
  stroke: #333;
  color: #222;
}

.red {
  stroke: #dc3038;
  color: #dc2830;
}

.bold {
  stroke-width: 1.4;
}

.green-line {
  fill: none;
  stroke: #20d820;
  stroke-width: 1.8;
}

.hub {
  fill: #fff;
  stroke: #444;
}

.mark {
  fill: #fff;
  stroke-width: .9;
}

.body {
  stroke: none;
}

.body text {
  fill: currentColor;
}

.body.green {
  color: #20d820;
}

.retro {
  font-size: 6.5px;
}

.house-label {
  fill: #222;
}

.roman {
  font: 9.5px "Noto Sans", sans-serif;
}

.fixed-star {
  fill: #1c1c84;
  font-size: 8px;
}

.info,
.summary {
  margin-left: 6px;
  white-space: pre;
  line-height: 10.7px;
  width: max-content;
  height: max-content;
}

.info {
  margin-top: 2.4px;
}

.info p,
.summary p {
  margin: 0;
  height: 10.7px;
}

.grey {
  margin-top: 5px;
  color: #949494;
  font-size: 8.4px;
}

.rom {
  font-family: "Noto Sans", sans-serif;
}

.rom.wide {
  letter-spacing: .3px;
}

.gl {
  width: 10px;
  height: 10px;
  vertical-align: -2px;
}

.summary {
  align-self: end;
  margin-bottom: .8px;
}

.counts {
  display: grid;
  grid-template-columns: repeat(8, 16px);
  grid-auto-rows: 13.35px;
  width: max-content;
  height: max-content;
  align-self: end;
  margin: 0 0 3px 647px;
  text-align: center;
  line-height: 13.35px;
}

.counts svg {
  display: block;
  width: 11px;
  height: 11px;
  margin: .5px auto 0;
}

.side {
  justify-self: end;
  width: 218px;
  padding-top: 21px;
}

.row {
  position: relative;
  display: flex;
  align-items: center;
  height: 13.33px;
  white-space: pre;
}

.name {
  width: 59px;
  text-align: right;
}

.dig {
  width: 11px;
  padding-left: 2px;
  margin-top: -1.5px;
  font: 10px "DejaVu Sans Mono", monospace;
}

.sym {
  display: flex;
  align-items: center;
  width: 15px;
}

.sym svg {
  flex: none;
  width: 10px;
  height: 10px;
}

.sym sub {
  font: 6px "DejaVu Sans", sans-serif;
  margin-top: 4px;
}

.sym b {
  width: 9px;
  height: 8px;
  border: 1px solid #333;
  font: 6.5px/6px "Liberation Sans", sans-serif;
  text-align: center;
  letter-spacing: -.4px;
}

.sym em {
  font: 8.3px "Liberation Sans", sans-serif;
  transform: scaleX(.85);
  transform-origin: left;
  letter-spacing: -.3px;
}

.num {
  flex: none;
  width: 13.4px;
  font: 11.1px "DejaVu Sans Mono", monospace;
  color: #333;
}

.num.asp {
  width: 6.7px;
}

.num.hot {
  color: #dc3038;
}

.sign {
  flex: none;
  width: 10.4px;
  height: 10.4px;
  margin: 0 1.5px;
}

.star {
  margin-left: 13px;
}

.busy {
  position: absolute;
  left: 87px;
  top: -3px;
  width: 10px;
  height: 16px;
}

.side hr {
  width: 157px;
  height: 1px;
  border: 0;
  background: #555;
  margin: 11px 0 8px 61px;
}

.houses .row {
  height: 13.3px;
}

.houses .name {
  width: 65px;
  margin-right: 7px;
}

.houses .sym {
  width: 13px;
}

.side hr.thick {
  height: 2px;
  margin: 1.4px 0 5.6px 61px;
  background: #999;
}

.patterns {
  height: 118.4px;
  padding-left: 65px;
}

.patterns div {
  display: flex;
  align-items: center;
  height: 13.33px;
}

.patterns svg {
  width: 9.5px;
  height: 9.5px;
  margin-right: 1px;
}

.patterns span {
  margin-left: 4.5px;
}

.patterns + hr {
  margin: 0 0 0 61px;
}

.chains {
  display: flex;
  flex-direction: column;
  align-items: flex-end;
  padding-top: 23px;
}

.chains span {
  margin-right: 12px;
  line-height: 10px;
  font-size: 8.7px;
}

.chains > svg {
  width: 110px;
  height: 45px;
  overflow: visible;
}

.cursor {
  position: absolute;
  left: 995px;
  top: 70px;
  width: 8px;
  height: 12px;
}

.taskbar {
  display: flex;
  align-items: center;
  border-top: 1px solid #62707f;
  box-shadow: inset 0 1px #dbe8f4;
  background: linear-gradient(90deg, #8198b4 0, #93aac6 90px, #a6c2df 250px, #aecde9 400px, #a3c1de 430px, #accbe7 520px, #a9c8e5 1060px, #90aac6 1085px, #728ba8 1110px, #6a829f 1280px);
}

.orb {
  width: 29px;
  height: 29px;
  margin-left: 7px;
}

.folder {
  width: 28px;
  height: 26px;
  margin: 0 10px 0 20px;
}

.task {
  width: 45px;
  height: 31px;
  margin: 1px 1px 0 0;
  display: flex;
  align-items: center;
  justify-content: center;
  border: 1px solid #6e86a2;
  border-radius: 2px;
  box-shadow: inset 0 0 0 1px #d6e4f2;
  background: linear-gradient(135deg, #c6d8ea, #a9c0d8);
}

.task.active {
  background: linear-gradient(#edf4fb, #cfdff0);
}

.task svg {
  width: 25px;
  height: 25px;
}

.tray {
  display: flex;
  align-items: center;
  margin-left: auto;
  height: 100%;
  color: #fff;
  font: 9.5px "Open Sans", sans-serif;
}

.lang {
  margin-right: 14px;
  color: #dfe8f2;
  font-size: 10px;
}

.tray svg {
  width: 14px;
  height: 14px;
  margin-right: 6px;
}

.up {
  border: 3px solid transparent;
  border-top: 0;
  border-bottom: 3px solid #fff;
  margin-right: 13px;
}

.clock {
  display: flex;
  flex-direction: column;
  align-items: center;
  width: 52px;
  margin: 0 8px 0 6.5px;
  line-height: 14.5px;
  white-space: nowrap;
}

.peekbtn {
  width: 10px;
  height: 100%;
  border-left: 1px solid #46586e;
  background: linear-gradient(#a4b4c6, #68809c);
}

.recorder {
  position: absolute;
  left: 433px;
  top: 0;
  width: 415px;
  height: 20.5px;
  display: flex;
  align-items: center;
  background: #232933;
  clip-path: polygon(0 0, 100% 0, 395px 100%, 20px 100%);
  color: #f0f2f4;
  font: 9.3px "Open Sans", sans-serif;
}

.burger {
  width: 10px;
  height: 10px;
  margin-left: 26px;
}

.pin {
  width: 8px;
  height: 11px;
  margin-left: 13px;
}

.res {
  margin-left: 9.5px;
  width: 101px;
}

.rec {
  width: 112px;
}

.pause {
  width: 8px;
  height: 11px;
}

.stop {
  width: 10px;
  height: 10px;
  margin-left: 14px;
  background: #d82c2c;
}

.cam {
  width: 13px;
  height: 11px;
  margin-left: 14px;
}

.pen {
  width: 12px;
  height: 12px;
  margin-left: 11px;
}

.x {
  width: 8px;
  height: 8px;
  margin-left: 16px;
}
</style>
